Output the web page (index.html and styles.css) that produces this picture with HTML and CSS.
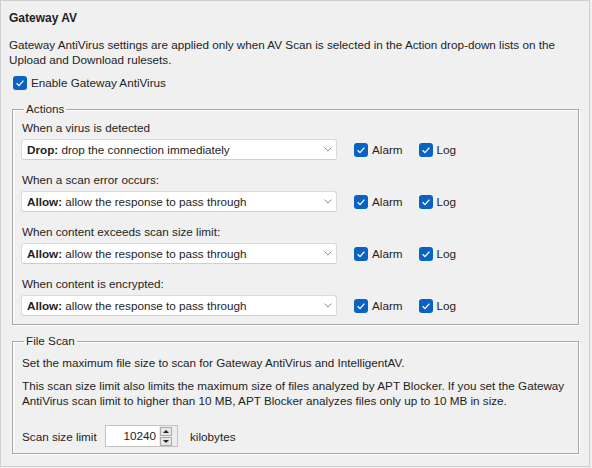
FILE: index.html
```html
<!DOCTYPE html>
<html>
<head>
<meta charset="utf-8">
<link rel="stylesheet" href="styles.css">
</head>
<body>
<div class="panel">
  <div class="title">Gateway AV</div>
  <p class="desc">Gateway AntiVirus settings are applied only when AV Scan is selected in the Action drop-down lists on the Upload and Download rulesets.</p>
  <label class="check enable"><span class="box"><svg viewBox="0 0 14 14"><path d="M3.6 7.3 L6 9.6 L10.4 4.6"/></svg></span>Enable Gateway AntiVirus</label>

  <fieldset class="group actions">
    <legend>Actions</legend>
    <div class="row">
      <div class="label">When a virus is detected</div>
      <div class="controls">
        <div class="select"><span><b>Drop:</b> drop the connection immediately</span><svg class="chev" viewBox="0 0 10 6"><path d="M0.5 0.5 L5 5 L9.5 0.5"/></svg></div>
        <label class="check"><span class="box"><svg viewBox="0 0 14 14"><path d="M3.6 7.3 L6 9.6 L10.4 4.6"/></svg></span>Alarm</label>
        <label class="check"><span class="box"><svg viewBox="0 0 14 14"><path d="M3.6 7.3 L6 9.6 L10.4 4.6"/></svg></span>Log</label>
      </div>
    </div>
    <div class="row">
      <div class="label">When a scan error occurs:</div>
      <div class="controls">
        <div class="select"><span><b>Allow:</b> allow the response to pass through</span><svg class="chev" viewBox="0 0 10 6"><path d="M0.5 0.5 L5 5 L9.5 0.5"/></svg></div>
        <label class="check"><span class="box"><svg viewBox="0 0 14 14"><path d="M3.6 7.3 L6 9.6 L10.4 4.6"/></svg></span>Alarm</label>
        <label class="check"><span class="box"><svg viewBox="0 0 14 14"><path d="M3.6 7.3 L6 9.6 L10.4 4.6"/></svg></span>Log</label>
      </div>
    </div>
    <div class="row">
      <div class="label">When content exceeds scan size limit:</div>
      <div class="controls">
        <div class="select"><span><b>Allow:</b> allow the response to pass through</span><svg class="chev" viewBox="0 0 10 6"><path d="M0.5 0.5 L5 5 L9.5 0.5"/></svg></div>
        <label class="check"><span class="box"><svg viewBox="0 0 14 14"><path d="M3.6 7.3 L6 9.6 L10.4 4.6"/></svg></span>Alarm</label>
        <label class="check"><span class="box"><svg viewBox="0 0 14 14"><path d="M3.6 7.3 L6 9.6 L10.4 4.6"/></svg></span>Log</label>
      </div>
    </div>
    <div class="row">
      <div class="label">When content is encrypted:</div>
      <div class="controls">
        <div class="select"><span><b>Allow:</b> allow the response to pass through</span><svg class="chev" viewBox="0 0 10 6"><path d="M0.5 0.5 L5 5 L9.5 0.5"/></svg></div>
        <label class="check"><span class="box"><svg viewBox="0 0 14 14"><path d="M3.6 7.3 L6 9.6 L10.4 4.6"/></svg></span>Alarm</label>
        <label class="check"><span class="box"><svg viewBox="0 0 14 14"><path d="M3.6 7.3 L6 9.6 L10.4 4.6"/></svg></span>Log</label>
      </div>
    </div>
  </fieldset>

  <fieldset class="group filescan">
    <legend>File Scan</legend>
    <p class="fs-text">Set the maximum file size to scan for Gateway AntiVirus and IntelligentAV.</p>
    <p class="fs-text gap">This scan size limit also limits the maximum size of files analyzed by APT Blocker. If you set the Gateway AntiVirus scan limit to higher than 10 MB, APT Blocker analyzes files only up to 10 MB in size.</p>
    <div class="limit">
      <span class="limit-label">Scan size limit</span>
      <div class="spin">
        <span class="spin-value">10240</span>
        <div class="spin-btns">
          <span class="spin-btn up"></span>
          <span class="spin-btn down"></span>
        </div>
      </div>
      <span class="unit">kilobytes</span>
    </div>
  </fieldset>
</div>
</body>
</html>
```

FILE: styles.css
```css
* { box-sizing: border-box; }
html, body {
  margin: 0;
  padding: 0;
  background: #f0f0f0;
}
body {
  font-family: "Liberation Sans", Arial, sans-serif;
  font-size: 11.7px;
  color: #1e1e1e;
}
.panel {
  width: 590px;
  height: 467px;
  border: 1px solid #cfcfcf;
  padding: 9px 10px 0 8px;
  background: #f0f0f0;
}
.title {
  font-weight: bold;
  font-size: 12px;
  line-height: 16px;
}
.desc {
  margin: 11px 0 0 0;
  line-height: 15px;
}
.check {
  display: inline-flex;
  align-items: center;
  line-height: 16px;
}
.box {
  width: 14px;
  height: 14px;
  border-radius: 3px;
  background: #0a62c2;
  margin-right: 4px;
  display: inline-flex;
}
.box svg {
  width: 14px;
  height: 14px;
}
.box path {
  fill: none;
  stroke: #ffffff;
  stroke-width: 1.3;
}
.enable {
  display: flex;
  margin: 8px 0 0 4px;
}
.group {
  margin: 0 0 0 3px;
  border: 1px solid #a8a8a8;
  box-shadow: inset 1px 1px 0 #ffffff, 1px 1px 0 #ffffff;
  padding: 3px 8px 8px 8px;
  min-width: 0;
}
.group legend {
  padding: 0 2px;
  margin-left: 3px;
  line-height: 16px;
}
.actions {
  margin-top: 10px;
}
.row + .row {
  margin-top: 12px;
}
.label {
  line-height: 16px;
  padding-left: 1px;
}
.controls {
  display: flex;
  align-items: center;
  margin-top: 3px;
}
.select {
  width: 316px;
  height: 21px;
  background: #ffffff;
  border: 1px solid #dadada;
  border-bottom-color: #cfcfcf;
  border-radius: 3px;
  display: flex;
  align-items: center;
  justify-content: space-between;
  padding: 0 4px 0 5px;
  margin-right: 17px;
}
.chev {
  width: 8px;
  height: 5px;
}
.chev path {
  fill: none;
  stroke: #707070;
  stroke-width: 1;
}
.controls .check + .check {
  margin-left: 16px;
}
.filescan {
  margin-top: 8px;
  padding-top: 6px;
  padding-bottom: 6px;
}
.fs-text {
  margin: 0;
  line-height: 15px;
  padding-left: 1px;
}
.fs-text.gap {
  margin-top: 8px;
}
.limit {
  display: flex;
  align-items: center;
  margin-top: 17px;
  padding-left: 1px;
}
.limit-label {
  width: 83px;
}
.spin {
  width: 73px;
  height: 22px;
  border: 1px solid #c4c4c4;
  background: #ececec;
  display: flex;
  align-items: center;
  padding-right: 5px;
}
.spin-value {
  flex: 1;
  height: 100%;
  background: #ffffff;
  text-align: right;
  line-height: 20px;
  padding-right: 3px;
}
.spin-btns {
  display: flex;
  flex-direction: column;
  gap: 1px;
  margin-left: 1px;
}
.spin-btn {
  width: 12px;
  height: 9px;
  border: 1px solid #adadad;
  background: #e6e6e6;
  position: relative;
}
.spin-btn::after {
  content: "";
  position: absolute;
  left: 2px;
  width: 0;
  height: 0;
  border-left: 3px solid transparent;
  border-right: 3px solid transparent;
}
.spin-btn.up::after {
  top: 2px;
  border-bottom: 3px solid #222;
}
.spin-btn.down::after {
  top: 2px;
  border-top: 3px solid #222;
}
.unit {
  margin-left: 12px;
}
```
